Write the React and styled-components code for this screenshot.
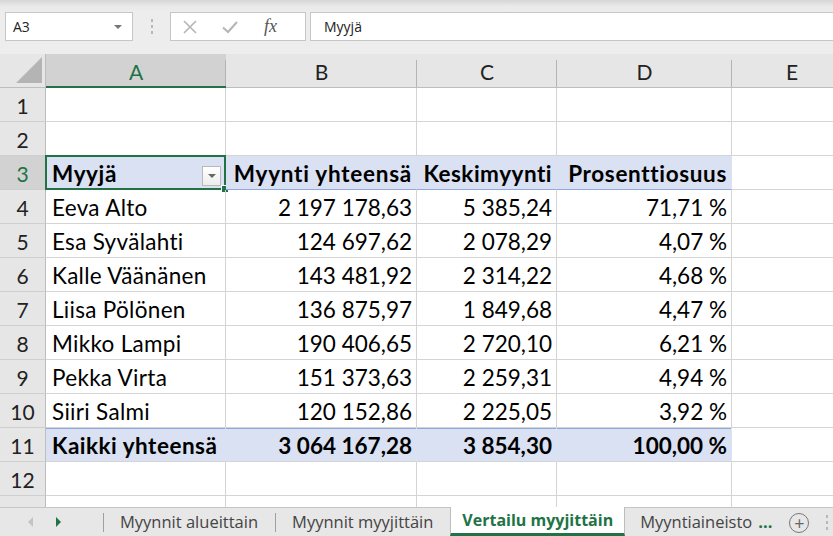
import React from 'react'
import styled, { createGlobalStyle, css } from 'styled-components'

const GlobalStyle = createGlobalStyle`
  html, body {
    margin: 0;
    padding: 0;
    overflow: hidden;
    background: #ffffff;
  }
  body {
    font-family: 'Lato', 'Liberation Sans', sans-serif;
  }
`

const green = '#217346'
const grid = '#d4d4d4'
const headBg = '#e6e6e6'
const pivotBg = '#d9e1f2'
const pivotLine = '#8ea9db'

const Window = styled.div`
  width: 833px;
  height: 536px;
  display: flex;
  flex-direction: column;
  overflow: hidden;
`

const Toolbar = styled.div`
  height: 54px;
  box-sizing: border-box;
  padding: 12px 0 13px 5px;
  display: flex;
  align-items: stretch;
  background: linear-gradient(#d6d6d6 0px, #e9e9e9 6px, #ededed 12px);
`

const NameBox = styled.div`
  width: 128px;
  box-sizing: border-box;
  background: #fff;
  border: 1px solid #c6c6c6;
  display: flex;
  align-items: center;
  justify-content: space-between;
  padding: 0 10px 0 7px;
  font-family: 'Open Sans', sans-serif;
  font-size: 14px;
  color: #222;
`

const Caret = styled.span`
  width: 0;
  height: 0;
  border-left: 4px solid transparent;
  border-right: 4px solid transparent;
  border-top: 4px solid #777;
`

const Grip = styled.div`
  width: 37px;
  display: flex;
  flex-direction: column;
  align-items: center;
  justify-content: center;
  gap: 3px;
  span {
    width: 2px;
    height: 3px;
    background: #b8b8b8;
  }
`

const IconBox = styled.div`
  width: 136px;
  box-sizing: border-box;
  background: #fff;
  border: 1px solid #c6c6c6;
  display: flex;
  align-items: center;
  padding: 0 0 0 11px;
  gap: 23px;
`

const Fx = styled.span`
  font-family: 'Liberation Serif', serif;
  font-style: italic;
  font-size: 18px;
  color: #555;
  margin-left: 2px;
`

const FormulaInput = styled.div`
  flex: 1;
  margin-left: 4px;
  background: #fff;
  border: 1px solid #c6c6c6;
  border-right: none;
  display: flex;
  align-items: center;
  padding-left: 13px;
  font-family: 'Open Sans', sans-serif;
  font-size: 14px;
  color: #222;
`

const Sheet = styled.div`
  flex: 1;
  overflow: hidden;
  display: grid;
  grid-template-columns: 46px 180px 191px 140px 175px 120px;
  grid-auto-rows: 34px;
  align-content: start;
`

const Corner = styled.div`
  background: ${headBg};
  border-right: 1px solid #bdbdbd;
  border-bottom: 1px solid #bdbdbd;
  position: relative;
  &::after {
    content: '';
    position: absolute;
    right: 3px;
    bottom: 4px;
    border-left: 26px solid transparent;
    border-bottom: 26px solid #b4b4b4;
  }
`

const ColHead = styled.div`
  background: ${p => (p.$active ? '#d2d2d2' : headBg)};
  color: ${p => (p.$active ? green : '#222')};
  border-bottom: ${p => (p.$active ? `2px solid ${green}` : '1px solid #bdbdbd')};
  display: flex;
  align-items: center;
  justify-content: center;
  font-family: 'Lato', sans-serif;
  font-size: 21px;
  padding-top: 2px;
  box-sizing: border-box;
  position: relative;
  &::after {
    content: '';
    position: absolute;
    right: 0;
    top: 6px;
    bottom: 0;
    width: 1px;
    background: #b4b4b4;
  }
`

const RowHead = styled.div`
  background: ${p => (p.$active ? '#d2d2d2' : headBg)};
  color: ${p => (p.$active ? green : '#222')};
  border-right: 1px solid #bdbdbd;
  border-bottom: 1px solid #cfcfcf;
  display: flex;
  align-items: center;
  justify-content: center;
  font-family: 'Lato', sans-serif;
  font-size: 21px;
  padding-top: 2px;
  box-sizing: border-box;
`

const Cell = styled.div`
  box-sizing: border-box;
  border-right: 1px solid ${grid};
  border-bottom: 1px solid ${grid};
  display: flex;
  align-items: center;
  justify-content: ${p => (p.$right ? 'flex-end' : 'flex-start')};
  padding: 2px 4px 0 6px;
  font-family: 'Lato', sans-serif;
  font-size: 22.5px;
  color: #000;
  white-space: nowrap;
  position: relative;
  ${p => p.$bold && css`font-weight: 700;`}
  ${p => p.$wide && css`letter-spacing: ${p.$wide}px;`}
  ${p => p.$pivot && css`
    background: ${pivotBg};
    border-right-color: ${pivotBg};
  `}
  ${p => p.$lineBelow && css`border-bottom-color: ${pivotLine};`}
  ${p => p.$lineAbove && css`box-shadow: inset 0 1px 0 ${pivotLine};`}
`

const Selection = styled.div`
  position: absolute;
  left: -1px;
  top: -1px;
  right: -1px;
  bottom: -1px;
  border: 2px solid ${green};
  pointer-events: none;
  &::after {
    content: '';
    position: absolute;
    right: -5px;
    bottom: -5px;
    width: 6px;
    height: 6px;
    background: ${green};
    border: 1px solid #fff;
  }
`

const FilterButton = styled.div`
  position: absolute;
  right: 4px;
  top: 10px;
  width: 19px;
  height: 20px;
  box-sizing: border-box;
  border: 1px solid #b9b9b9;
  background: linear-gradient(#ffffff, #ededed);
  display: flex;
  align-items: center;
  justify-content: center;
  &::before {
    content: '';
    border-left: 4px solid transparent;
    border-right: 4px solid transparent;
    border-top: 4px solid #666;
  }
`

const TabBar = styled.div`
  height: 29px;
  box-sizing: border-box;
  background: #e7e7e7;
  border-top: 1px solid #c6c6c6;
  display: flex;
  align-items: stretch;
  font-family: 'Open Sans', sans-serif;
  font-size: 16.5px;
  color: #444;
`

const Nav = styled.div`
  width: 103px;
  flex-shrink: 0;
  display: flex;
  align-items: center;
  padding-left: 28px;
  gap: 23px;
  box-sizing: border-box;
`

const Arrow = styled.span`
  width: 0;
  height: 0;
  border-top: 5px solid transparent;
  border-bottom: 5px solid transparent;
  ${p => (p.$dir === 'left'
    ? css`border-right: 5px solid #c4c4c4;`
    : css`border-left: 5px solid ${green};`)}
`

const Tab = styled.div`
  display: flex;
  align-items: center;
  flex-shrink: 0;
  padding: 0 ${p => p.$pad ?? 17}px 2px;
  position: relative;
  white-space: nowrap;
  border-left: 1px solid ${p => (p.$active ? '#bdbdbd' : 'transparent')};
  border-right: 1px solid ${p => (p.$active ? '#bdbdbd' : 'transparent')};
  margin-top: ${p => (p.$active ? '-1px' : '0')};
  ${p => p.$active && css`
    background: #fff;
    color: ${green};
    font-weight: 700;
    font-size: 16px;
    border-bottom: 3px solid ${green};
    padding-bottom: 0;
  `}
  ${p => p.$sep && css`
    &::before {
      content: '';
      position: absolute;
      left: -1px;
      top: 5px;
      bottom: 4px;
      width: 1px;
      background: #9f9f9f;
    }
  `}
`

const Dots = styled.span`
  color: ${green};
  font-weight: 700;
  margin-left: 6px;
`

const AddSheet = styled.div`
  width: 18px;
  height: 18px;
  flex-shrink: 0;
  margin: 5px 0 0 2px;
  border: 1.5px solid #777;
  border-radius: 50%;
  color: #666;
  display: flex;
  align-items: center;
  justify-content: center;
  font-size: 18px;
  line-height: 1;
`

const VGrip = styled.div`
  margin-left: 17px;
  display: flex;
  flex-direction: column;
  justify-content: center;
  gap: 3px;
  span {
    width: 2px;
    height: 3px;
    background: #b8b8b8;
  }
`

const rows = [
  ['Eeva Alto', '2 197 178,63', '5 385,24', '71,71 %'],
  ['Esa Syvälahti', '124 697,62', '2 078,29', '4,07 %'],
  ['Kalle Väänänen', '143 481,92', '2 314,22', '4,68 %'],
  ['Liisa Pölönen', '136 875,97', '1 849,68', '4,47 %'],
  ['Mikko Lampi', '190 406,65', '2 720,10', '6,21 %'],
  ['Pekka Virta', '151 373,63', '2 259,31', '4,94 %'],
  ['Siiri Salmi', '120 152,86', '2 225,05', '3,92 %'],
]

const cols = ['A', 'B', 'C', 'D', 'E']

function EmptyRow({ n }) {
  return (
    <>
      <RowHead>{n}</RowHead>
      {cols.map(c => <Cell key={c} />)}
    </>
  )
}

export default function App() {
  return (
    <Window>
      <GlobalStyle />
      <Toolbar>
        <NameBox>A3<Caret /></NameBox>
        <Grip><span /><span /><span /></Grip>
        <IconBox>
          <svg width="16" height="16" viewBox="0 0 16 16">
            <path d="M2 2 L14 14 M14 2 L2 14" stroke="#b5b5b5" strokeWidth="1.6" fill="none" />
          </svg>
          <svg width="18" height="16" viewBox="0 0 18 16">
            <path d="M2 8.5 L7 13 L16 3" stroke="#b5b5b5" strokeWidth="2" fill="none" />
          </svg>
          <Fx>fx</Fx>
        </IconBox>
        <FormulaInput>Myyjä</FormulaInput>
      </Toolbar>

      <Sheet>
        <Corner />
        {cols.map(c => <ColHead key={c} $active={c === 'A'}>{c}</ColHead>)}

        <EmptyRow n={1} />
        <EmptyRow n={2} />

        <RowHead $active>3</RowHead>
        <Cell $bold $wide={0.6} $pivot $lineBelow>
          Myyjä
          <FilterButton />
          <Selection />
        </Cell>
        <Cell $bold $wide={0.75} $pivot $lineBelow $right>Myynti yhteensä</Cell>
        <Cell $bold $wide={0.5} $pivot $lineBelow $right>Keskimyynti</Cell>
        <Cell $bold $wide={0.65} $pivot $lineBelow $right>Prosenttiosuus</Cell>
        <Cell />

        {rows.map((r, i) => (
          <React.Fragment key={r[0]}>
            <RowHead>{i + 4}</RowHead>
            <Cell $wide={0.3}>{r[0]}</Cell>
            <Cell $right>{r[1]}</Cell>
            <Cell $right>{r[2]}</Cell>
            <Cell $right>{r[3]}</Cell>
            <Cell />
          </React.Fragment>
        ))}

        <RowHead>11</RowHead>
        <Cell $bold $wide={0.5} $pivot $lineAbove>Kaikki yhteensä</Cell>
        <Cell $bold $pivot $lineAbove $right>3 064 167,28</Cell>
        <Cell $bold $pivot $lineAbove $right>3 854,30</Cell>
        <Cell $bold $pivot $lineAbove $right>100,00 %</Cell>
        <Cell />

        <EmptyRow n={12} />
        <EmptyRow n={13} />
      </Sheet>

      <TabBar>
        <Nav><Arrow $dir="left" /><Arrow $dir="right" /></Nav>
        <Tab $sep $pad={16}>Myynnit alueittain</Tab>
        <Tab $sep $pad={16}>Myynnit myyjittäin</Tab>
        <Tab $active $pad={11}>Vertailu myyjittäin</Tab>
        <Tab $pad={14}>Myyntiaineisto<Dots>...</Dots></Tab>
        <AddSheet>+</AddSheet>
        <VGrip><span /><span /><span /></VGrip>
      </TabBar>
    </Window>
  )
}
